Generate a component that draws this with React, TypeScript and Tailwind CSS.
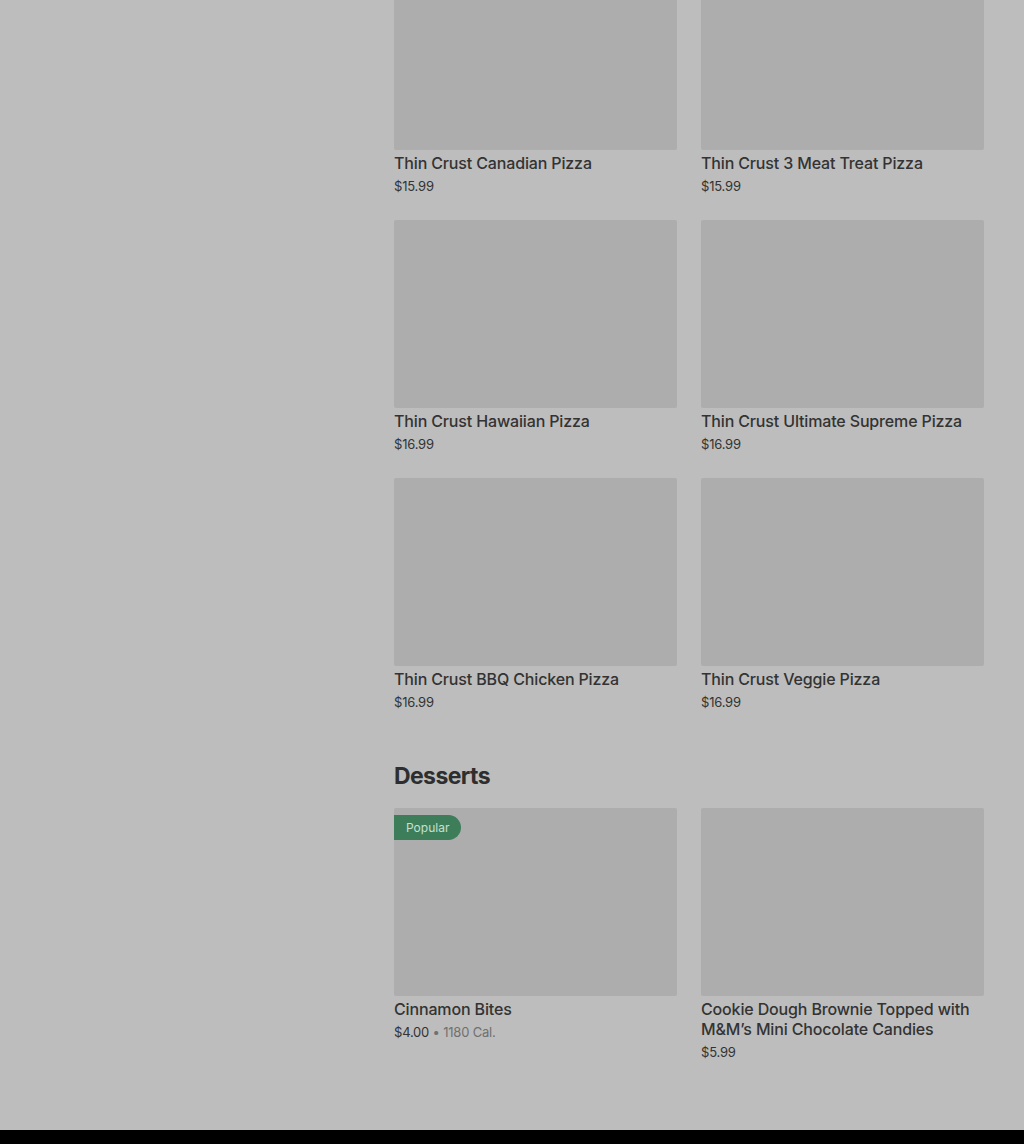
import React from "react";

type Item = { name: string; price: string; cal?: string; popular?: boolean };

const PIZZAS: Item[] = [
  { name: "Thin Crust Canadian Pizza", price: "$15.99" },
  { name: "Thin Crust 3 Meat Treat Pizza", price: "$15.99" },
  { name: "Thin Crust Hawaiian Pizza", price: "$16.99" },
  { name: "Thin Crust Ultimate Supreme Pizza", price: "$16.99" },
  { name: "Thin Crust BBQ Chicken Pizza", price: "$16.99" },
  { name: "Thin Crust Veggie Pizza", price: "$16.99" },
];

const DESSERTS: Item[] = [
  { name: "Cinnamon Bites", price: "$4.00", cal: "1180 Cal.", popular: true },
  { name: "Cookie Dough Brownie Topped with M&M’s Mini Chocolate Candies", price: "$5.99" },
];

function Card({ item }: { item: Item }) {
  return (
    <div>
      <div className="relative h-[188px] bg-[#adadad] rounded-[2px]">
        {item.popular && (
          <div className="absolute left-0 top-[7px] h-[25px] pl-3 pr-[12px] flex items-center rounded-r-full bg-[#3d7d5a] text-[#c6e0cf] text-[12px]">
            Popular
          </div>
        )}
      </div>
      <div className="mt-[3px] text-[16px] leading-[20px] font-medium tracking-[-0.15px] text-[#333]">{item.name}</div>
      <div className="mt-[4px] text-[13px] leading-[18px] tracking-[-0.2px] text-[#333]">
        {item.price}
        {item.cal && <span className="text-[#707070]"> • {item.cal}</span>}
      </div>
    </div>
  );
}

export default function App() {
  return (
    <div className="min-h-[1144px] bg-[#bdbdbd] overflow-hidden flex flex-col" style={{ fontFamily: "Inter, 'Noto Sans', sans-serif" }}>
      <div className="flex flex-1">
        <div className="w-[394px] shrink-0" />
        <main className="w-[590px] pb-[69px]">
          <div className="-mt-[38px] grid grid-cols-2 gap-x-6 gap-y-[25px]">
            {PIZZAS.map((p) => (
              <Card key={p.name} item={p} />
            ))}
          </div>
          <h2 className="mt-[49px] text-[23px] leading-[32px] font-bold tracking-[-0.6px] text-[#2e2e2e]">Desserts</h2>
          <div className="mt-4 grid grid-cols-2 gap-x-6">
            {DESSERTS.map((p) => (
              <Card key={p.name} item={p} />
            ))}
          </div>
        </main>
      </div>
      <footer className="h-[14px] bg-black shrink-0" />
    </div>
  );
}
